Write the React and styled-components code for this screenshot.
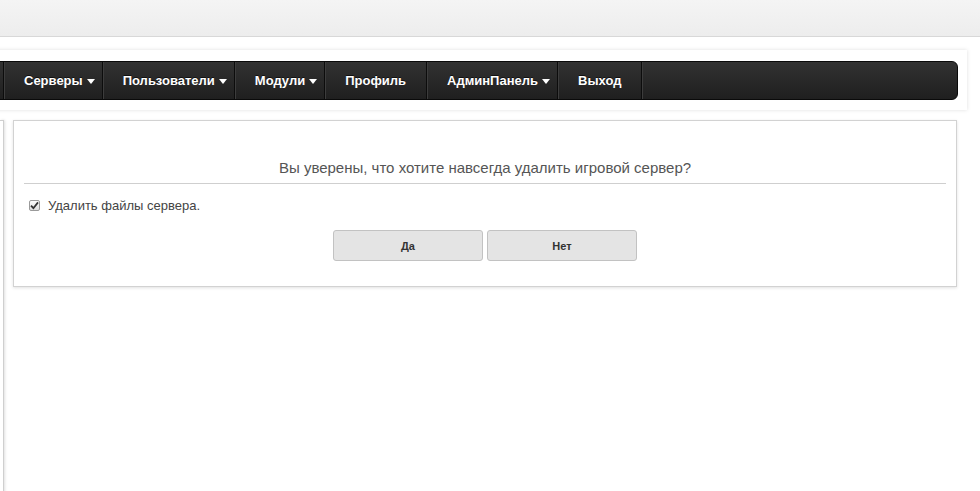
import React from 'react';
import { styled, createGlobalStyle } from 'styled-components';

const GlobalStyle = createGlobalStyle`
	html, body {
		margin: 0;
		padding: 0;
		background: #fff;
		overflow: hidden;
		font-family: "Liberation Sans", Arial, sans-serif;
	}
`;

const menu = [
	{ title: '', width: 13 },
	{ title: 'Серверы', dropdown: true },
	{ title: 'Пользователи', dropdown: true },
	{ title: 'Модули', dropdown: true },
	{ title: 'Профиль' },
	{ title: 'АдминПанель', dropdown: true },
	{ title: 'Выход' },
];

function App() {
	return (
		<Page>
			<GlobalStyle />
			<Header />
			<NavWrap>
				<Navbar>
					{ menu.map((item, i) => (
						<NavItem key={ i } $dropdown={ item.dropdown } $width={ item.width }>
							{ item.title }
							{ item.dropdown && <Caret /> }
						</NavItem>
					)) }
				</Navbar>
			</NavWrap>
			<Content>
				<Sidebar />
				<Panel>
					<Title>Вы уверены, что хотите навсегда удалить игровой сервер?</Title>
					<Divider />
					<CheckRow>
						<CheckBox>
							<svg width="9" height="9" viewBox="0 0 9 9">
								<path d="M1 4.6 L3.4 7.2 L8 1.4" fill="none" stroke="#333" strokeWidth="1.8" />
							</svg>
						</CheckBox>
						Удалить файлы сервера.
					</CheckRow>
					<Buttons>
						<Button>Да</Button>
						<Button>Нет</Button>
					</Buttons>
				</Panel>
			</Content>
		</Page>
	);
}

const Page = styled.div`
	width: 980px;
	height: 491px;
	overflow: hidden;
`;

const Header = styled.div`
	height: 36px;
	background: linear-gradient(#f4f4f4, #ededed);
	border-bottom: 1px solid #d8d8d8;
`;

const NavWrap = styled.div`
	margin: 13px 13px 0 -20px;
	padding: 11px 9px 10px 10px;
	background: #fff;
	box-shadow: 0 0 4px rgba(0, 0, 0, .13);
`;

const Navbar = styled.div`
	display: flex;
	height: 37px;
	background: linear-gradient(#323232, #1f1f1f);
	border: 1px solid #0a0a0a;
	border-radius: 6px;
	overflow: hidden;
`;

const NavItem = styled.div`
	display: flex;
	align-items: center;
	box-sizing: border-box;
	${ ({ $width }) => $width && `width: ${ $width }px;` }
	padding: ${ ({ $dropdown, $width }) => $width ? '0' : $dropdown ? '0 7px 0 20px' : '0 20px' };
	border-right: 1px solid #0c0c0c;
	box-shadow: 1px 0 0 #3c3c3c;
	color: #fff;
	font-size: 13px;
	font-weight: 700;
	text-shadow: 0 -1px 0 rgba(0, 0, 0, .6);
	white-space: nowrap;
`;

const Caret = styled.span`
	display: inline-block;
	margin-left: 4px;
	margin-top: 2px;
	border-top: 5px solid #fff;
	border-left: 4px solid transparent;
	border-right: 4px solid transparent;
`;

const Content = styled.div`
	display: flex;
	align-items: flex-start;
	margin-top: 10px;
`;

const Sidebar = styled.div`
	flex: none;
	width: 3px;
	height: 380px;
	background: #fff;
	border: 1px solid #cfcfcf;
	border-left: none;
	box-shadow: 1px 0 3px rgba(0, 0, 0, .12);
`;

const Panel = styled.div`
	box-sizing: border-box;
	width: 944px;
	margin-left: 9px;
	padding: 10px 10px 25px;
	background: #fff;
	border: 1px solid #d2d2d2;
	box-shadow: 0 1px 3px rgba(0, 0, 0, .12);
`;

const Title = styled.div`
	margin-top: 27px;
	text-align: center;
	color: #555;
	font-size: 15px;
	line-height: 20px;
`;

const Divider = styled.div`
	margin-top: 5px;
	border-top: 1px solid #cfcfcf;
`;

const CheckRow = styled.label`
	display: flex;
	align-items: center;
	gap: 8px;
	margin: 12px 0 0 5px;
	color: #444;
	font-size: 13px;
	line-height: 20px;
`;

const CheckBox = styled.span`
	display: flex;
	align-items: center;
	justify-content: center;
	box-sizing: border-box;
	width: 11px;
	height: 11px;
	margin-top: -2px;
	border: 1px solid #9a9a9a;
	border-radius: 2px;
	background: linear-gradient(#fdfdfd, #dedede);
`;

const Buttons = styled.div`
	display: flex;
	justify-content: center;
	gap: 4px;
	margin-top: 14px;
`;

const Button = styled.button`
	box-sizing: border-box;
	width: 150px;
	height: 31px;
	padding: 0;
	background: #e4e4e4;
	border: 1px solid #c2c2c2;
	border-radius: 3px;
	color: #333;
	font-family: "Liberation Sans", Arial, sans-serif;
	font-size: 11px;
	font-weight: 700;
	cursor: pointer;
`;

export default App;
